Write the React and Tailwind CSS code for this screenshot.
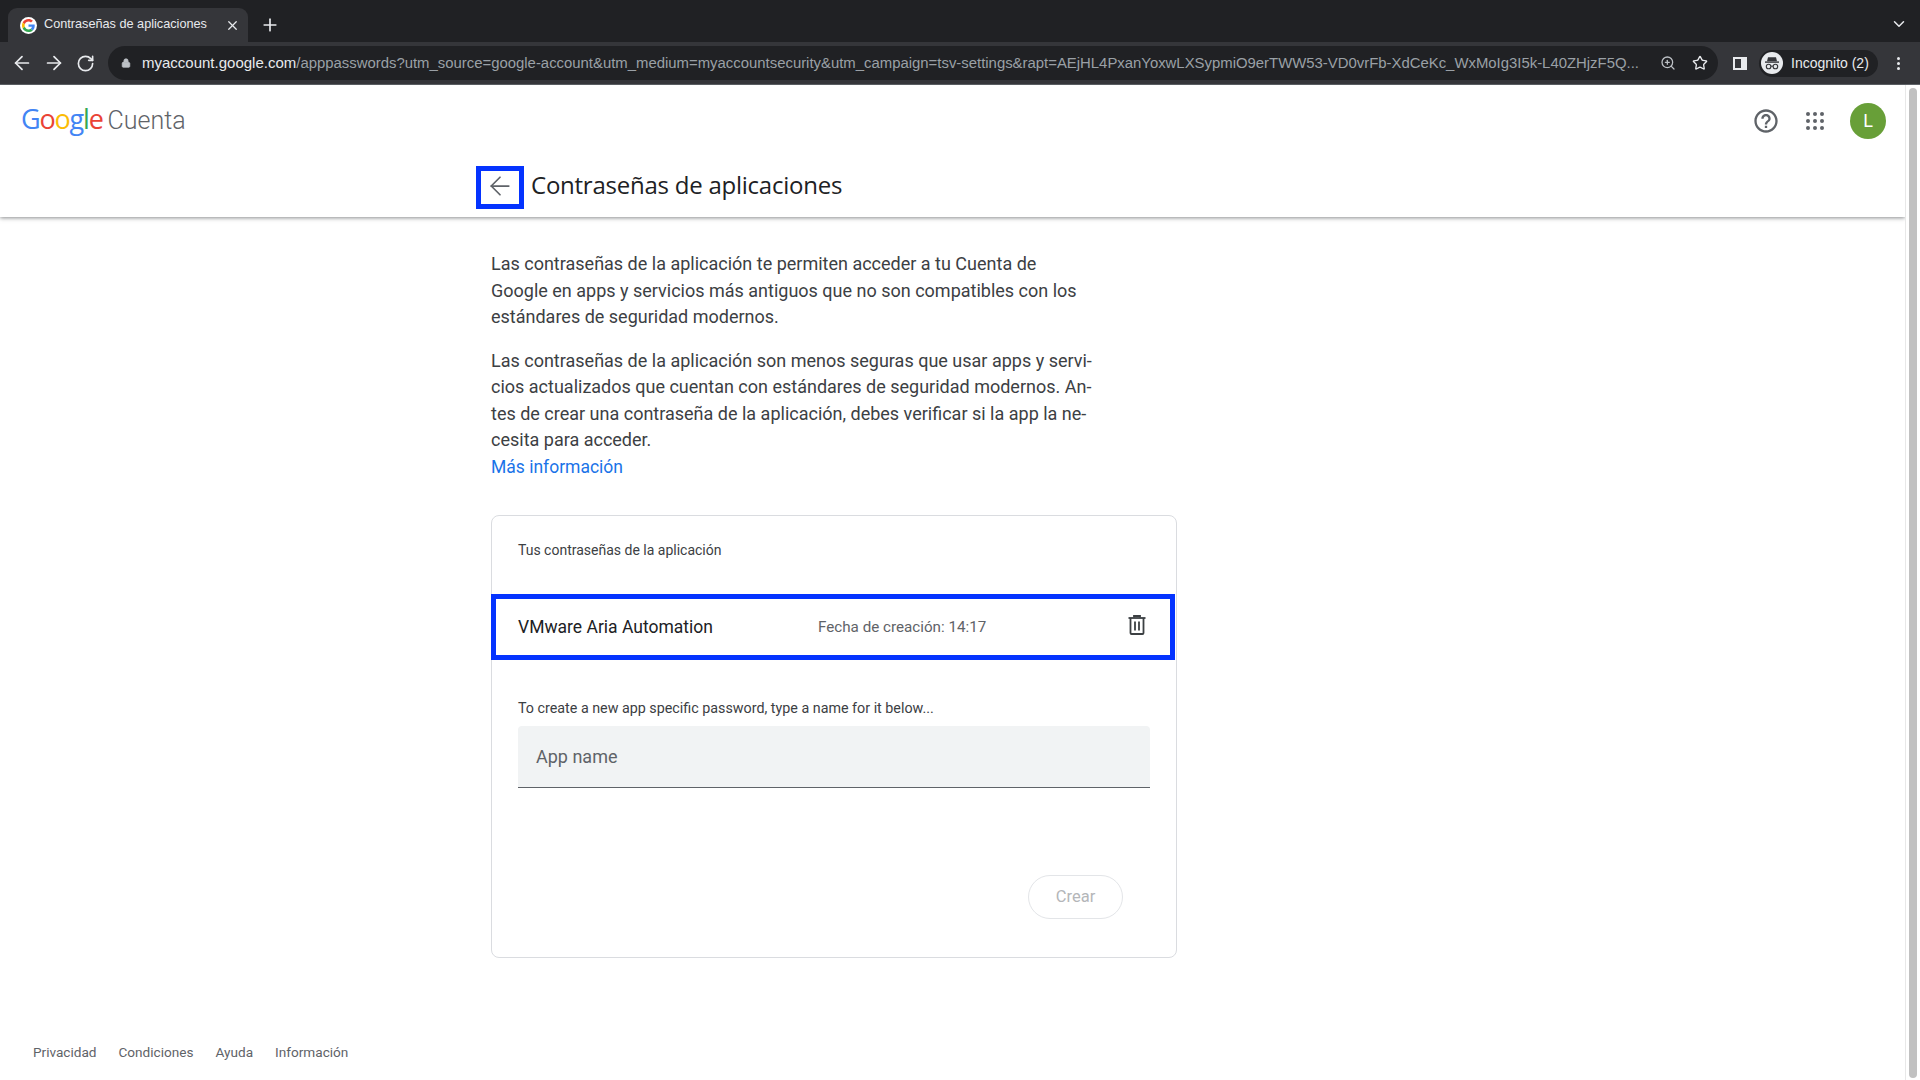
import React from "react";
import { ArrowLeft, ArrowRight, RotateCw, Lock, ZoomIn, Star, X, Plus, ChevronDown } from "lucide-react";

function GIcon() {
  return (
    <div className="w-[17px] h-[17px] rounded-full bg-white flex items-center justify-center shrink-0">
      <svg viewBox="0 0 48 48" className="w-[13px] h-[13px]">
        <path fill="#EA4335" d="M24 9.5c3.5 0 6.7 1.2 9.2 3.6l6.9-6.9C35.9 2.4 30.5 0 24 0 14.6 0 6.5 5.4 2.6 13.2l8 6.2C12.4 13.7 17.7 9.5 24 9.5z" />
        <path fill="#4285F4" d="M46.9 24.5c0-1.6-.1-3.1-.4-4.5H24v9h12.9c-.6 3-2.2 5.5-4.7 7.2l7.7 6c4.5-4.2 7-10.3 7-17.7z" />
        <path fill="#FBBC05" d="M10.5 28.6c-.5-1.4-.8-3-.8-4.6s.3-3.2.8-4.6l-8-6.2C.9 16.5 0 20.1 0 24s.9 7.5 2.6 10.8l7.9-6.2z" />
        <path fill="#34A853" d="M24 48c6.5 0 11.9-2.1 15.9-5.8l-7.7-6c-2.2 1.4-4.9 2.3-8.2 2.3-6.3 0-11.6-4.2-13.5-9.9l-8 6.2C6.5 42.6 14.6 48 24 48z" />
      </svg>
    </div>
  );
}

function Incognito() {
  return (
    <svg viewBox="0 0 22 22" className="w-[22px] h-[22px] shrink-0">
      <circle cx="11" cy="11" r="11" fill="#e8eaed" />
      <path fill="#35363a" d="M7 5.2h8l1 4H6z" />
      <rect x="4" y="9.4" width="14" height="1.4" fill="#35363a" />
      <circle cx="7.6" cy="14.5" r="2.3" fill="none" stroke="#35363a" strokeWidth="1.1" />
      <circle cx="14.4" cy="14.5" r="2.3" fill="none" stroke="#35363a" strokeWidth="1.1" />
      <path stroke="#35363a" strokeWidth="1" d="M9.9 14.2h2.2" />
    </svg>
  );
}

function AppsGrid() {
  return (
    <div className="grid grid-cols-3 gap-[3px] w-[18px]">
      {[0, 1, 2, 3, 4, 5, 6, 7, 8].map((i) => (
        <span key={i} className="w-1 h-1 rounded-full bg-[#5f6368]" />
      ))}
    </div>
  );
}

function HelpIcon() {
  return (
    <svg viewBox="0 0 24 24" className="w-[28px] h-[28px]" fill="#5f6368">
      <path d="M11 18h2v-2h-2v2zm1-16C6.48 2 2 6.48 2 12s4.48 10 10 10 10-4.48 10-10S17.52 2 12 2zm0 18c-4.41 0-8-3.59-8-8s3.59-8 8-8 8 3.59 8 8-3.59 8-8 8zm0-14c-2.21 0-4 1.79-4 4h2c0-1.1.9-2 2-2s2 .9 2 2c0 2-3 1.75-3 5h2c0-2.25 3-2.5 3-5 0-2.21-1.79-4-4-4z" />
    </svg>
  );
}

function TrashIcon() {
  return (
    <svg viewBox="0 0 18 20" className="w-[18px] h-[20px] -mt-1" fill="none" stroke="#3c4043" strokeWidth="1.8">
      <path d="M6 2.5V1h6v1.5" />
      <path d="M0.5 3h17" />
      <path d="M2.5 3v15a1 1 0 0 0 1 1h11a1 1 0 0 0 1-1V3" />
      <path d="M7 6.5v9M11 6.5v9" />
    </svg>
  );
}

export default function App() {
  return (
    <div className="w-[1920px] h-[1080px] overflow-hidden flex flex-col bg-white font-['Roboto',sans-serif]">
      {/* tab strip */}
      <div className="h-[42px] bg-[#202124] flex items-end pl-2 pr-[12px] shrink-0">
        <div className="w-[240px] h-[34px] bg-[#35363a] rounded-t-[9px] flex items-center pl-[12px] pr-[8px] gap-[7px]">
          <GIcon />
          <span className="flex-1 text-[12.7px] text-[#e8eaed] font-['Liberation_Sans',sans-serif] whitespace-nowrap">Contraseñas de aplicaciones</span>
          <X className="w-[15px] h-[15px] text-[#e8eaed]" strokeWidth={2} />
        </div>
        <Plus className="w-[20px] h-[20px] text-[#e8eaed] ml-[12px] mb-[7px]" strokeWidth={2} />
        <div className="flex-1" />
        <ChevronDown className="w-[18px] h-[18px] text-[#e8eaed] mb-[9px]" strokeWidth={2} />
      </div>
      {/* toolbar */}
      <div className="h-[42px] bg-[#35363a] flex items-center pl-[11px] shrink-0">
        <ArrowLeft className="w-[22px] h-[22px] text-[#e8eaed] mr-[10px]" strokeWidth={1.9} />
        <ArrowRight className="w-[22px] h-[22px] text-[#e8eaed] mr-[11px]" strokeWidth={1.9} />
        <RotateCw className="w-[19px] h-[19px] text-[#e8eaed] mr-[13px]" strokeWidth={2.1} />
        <div className="w-[1610px] h-[34px] rounded-full bg-[#202124] flex items-center pl-[13px] pr-[10px] shrink-0">
          <Lock className="w-[10px] h-[10px] text-[#bdc1c6] mr-[11px] shrink-0" fill="#bdc1c6" strokeWidth={2} />
          <span className="w-[1498px] shrink-0 whitespace-nowrap text-[14.9px] font-['Liberation_Sans',sans-serif] text-[#9aa0a6]">
            <span className="text-[#e8eaed] text-[15px]">myaccount.google.com</span>/apppasswords?utm_source=google-account&amp;utm_medium=myaccountsecurity&amp;utm_campaign=tsv-settings&amp;rapt=AEjHL4PxanYoxwLXSypmiO9erTWW53-VD0vrFb-XdCeKc_WxMoIg3I5k-L40ZHjzF5Q...
          </span>
          <div className="flex-1" />
          <ZoomIn className="w-[16px] h-[16px] text-[#bdc1c6] mr-[16px] shrink-0" strokeWidth={1.9} />
          <Star className="w-[16px] h-[16px] text-[#e8eaed] shrink-0" strokeWidth={2} />
        </div>
        <div className="w-[14px] h-[13px] border-2 border-[#e8eaed] border-r-[6px] bg-[#35363a] ml-[15px] shrink-0" />
        <div className="ml-[12px] h-[27px] w-[119px] rounded-full bg-[#202124] flex items-center pl-[2px] gap-[8px] shrink-0">
          <Incognito />
          <span className="text-[14px] text-[#e8eaed] font-['Liberation_Sans',sans-serif] whitespace-nowrap">Incognito (2)</span>
        </div>
        <div className="ml-[19px] flex flex-col gap-[2px] shrink-0">
          <span className="w-[3px] h-[3px] rounded-full bg-[#e8eaed]" />
          <span className="w-[3px] h-[3px] rounded-full bg-[#e8eaed]" />
          <span className="w-[3px] h-[3px] rounded-full bg-[#e8eaed]" />
        </div>
      </div>
      <div className="h-[1px] bg-[#5f6368] shrink-0" />
      {/* page */}
      <div className="flex-1 flex min-h-0">
        <div className="flex-1 flex flex-col min-w-0">
          <header className="h-[132px] shrink-0 flex flex-col shadow-[0_1px_4px_rgba(60,64,67,0.6)]">
            <div className="h-[71px] flex items-center pl-[21px] pr-[19px]">
              <span className="-mt-[4px] font-['Open_Sans',sans-serif] text-[27px] tracking-[-1.2px] leading-none">
                <span className="text-[#4285f4]">G</span>
                <span className="text-[#ea4335]">o</span>
                <span className="text-[#fbbc05]">o</span>
                <span className="text-[#4285f4]">g</span>
                <span className="text-[#34a853]">l</span>
                <span className="text-[#ea4335]">e</span>
              </span>
              <span className="ml-[5px] text-[25px] font-light text-[#5f6368] leading-none">Cuenta</span>
              <div className="flex-1" />
              <HelpIcon />
              <div className="ml-[26px]"><AppsGrid /></div>
              <div className="ml-[26px] w-[36px] h-[36px] rounded-full bg-[#689f38] text-white text-[18px] flex items-center justify-center">L</div>
            </div>
            <div className="flex items-center pl-[476px] pt-[10px]">
              <div className="w-[48px] h-[43px] border-[5px] border-[#0433ff] flex items-center justify-center">
                <ArrowLeft className="w-[30px] h-[30px] text-[#5f6368] -mt-[3px]" strokeWidth={1.4} />
              </div>
              <h1 className="ml-[7px] -mt-[5px] text-[24px] text-[#202124] font-['Open_Sans',sans-serif] tracking-[-0.24px]">Contraseñas de aplicaciones</h1>
            </div>
          </header>
          <main className="ml-[491px] w-[686px] pt-[34px]">
            <div className="w-[610px] text-[18px] leading-[26.5px] text-[#3c4043]">
              <p>Las contraseñas de la aplicación te permiten acceder a tu Cuenta de<br />Google en apps y servicios más antiguos que no son compatibles con los<br />estándares de seguridad modernos.</p>
              <p className="mt-[17px]">Las contraseñas de la aplicación son menos seguras que usar apps y servi-<br />cios actualizados que cuentan con estándares de seguridad modernos. An-<br />tes de crear una contraseña de la aplicación, debes verificar si la app la ne-<br />cesita para acceder.</p>
              <a className="block text-[17.5px] text-[#1a73e8] whitespace-nowrap">Más información</a>
            </div>
            <section className="mt-[35px] h-[443px] border border-[#dadce0] rounded-lg flex flex-col">
              <div className="pl-[26px] pt-[24px] h-[78px] text-[14px] text-[#3c4043]">Tus contraseñas de la aplicación</div>
              <div className="h-[66px] -ml-px w-[684px] border-[5px] border-[#0433ff] flex items-center pl-[22px] pr-[24px]">
                <span className="w-[300px] text-[17.5px] text-[#202124]">VMware Aria Automation</span>
                <span className="flex-1 text-[15.2px] text-[#5f6368]">Fecha de creación: 14:17</span>
                <TrashIcon />
              </div>
              <div className="pl-[26px] pr-[26px] pt-[39px]">
                <div className="text-[14.3px] leading-[18px] text-[#3c4043]">To create a new app specific password, type a name for it below...</div>
                <div className="mt-[9px] h-[62px] bg-[#f1f3f4] rounded-t border-b border-[#5f6368] flex items-center pl-[18px] text-[18px] text-[#5f6368]">App name</div>
              </div>
              <div className="flex justify-end pr-[53px] pt-[87px]">
                <div className="w-[95px] h-[44px] rounded-full border border-[#e3e5e8] flex items-center justify-center text-[16.5px] text-[#b4b6b9]">Crear</div>
              </div>
            </section>
          </main>
          <footer className="mt-auto pb-[18px] pl-[33px] flex gap-[22px] text-[13.6px] text-[#5f6368]">
            <span>Privacidad</span><span>Condiciones</span><span>Ayuda</span><span>Información</span>
          </footer>
        </div>
        <div className="w-[15px] shrink-0 bg-white border-l border-[#e8e8e8] pl-[3px] pr-[3px] pt-[3px]">
          <div className="h-[990px] w-full rounded-full bg-[#c1c1c1]" />
        </div>
      </div>
    </div>
  );
}
